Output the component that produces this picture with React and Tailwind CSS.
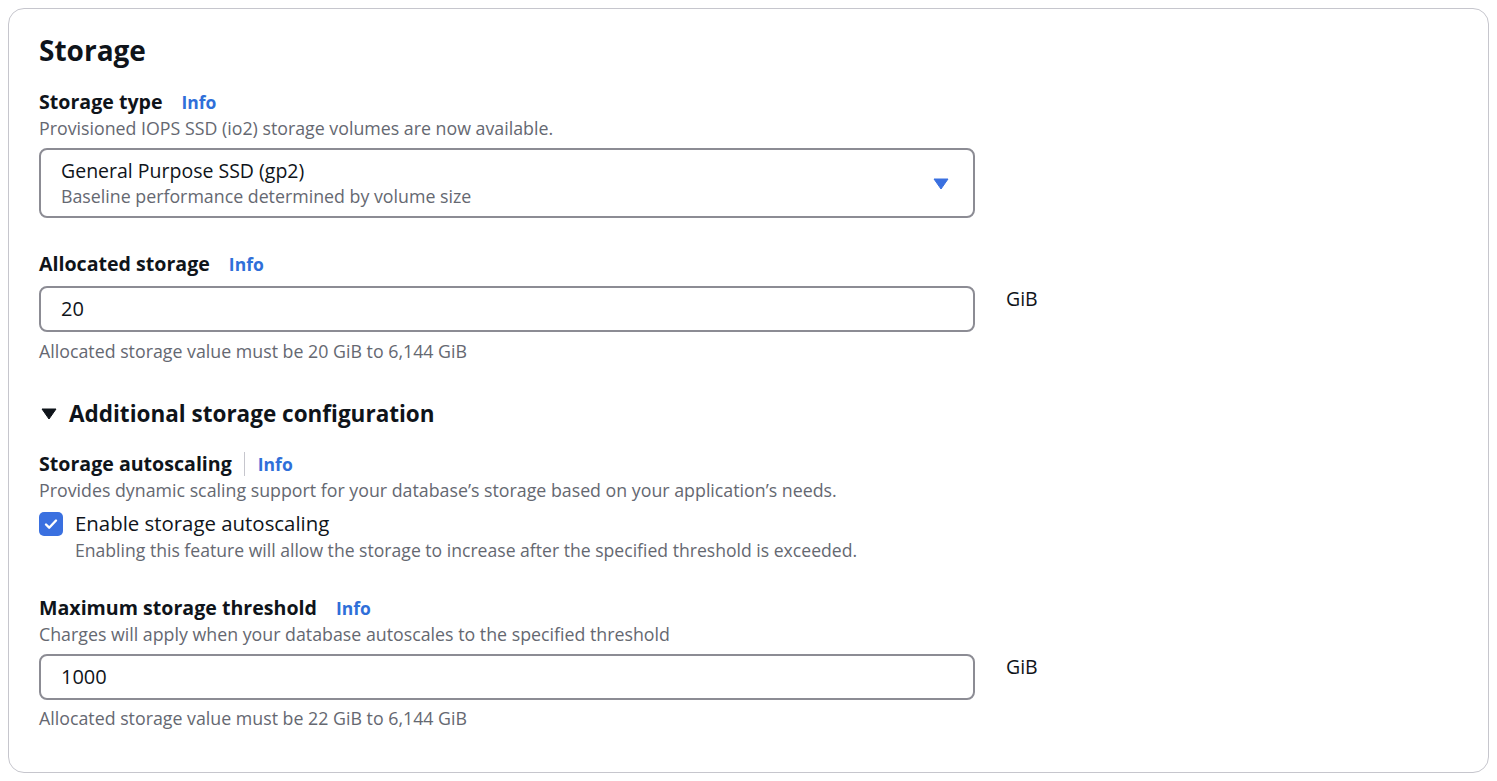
import { useState } from 'react'

function Info() {
  return <a className="text-[#2f6fd9] font-bold text-[17.5px] leading-[24px] cursor-pointer">Info</a>
}

function Label({ text, divider, children }) {
  return (
    <div className="flex items-center text-[19.6px] leading-[24px]">
      <span className="font-bold text-[#0f141a]">{text}</span>
      {divider ? <span className="ml-3 mr-[13px] h-[24px] w-px bg-[#c6c6cd]" /> : <span className="w-[19px]" />}
      {children}
    </div>
  )
}

function NumInput({ value }) {
  return (
    <div className="flex items-start">
      <div className="w-[936px] h-[46px] border-2 border-[#8c8c94] rounded-[8px] flex items-center px-5 text-[20px] text-[#0f141a]">
        {value}
      </div>
      <span className="ml-[31px] mt-[1px] text-[19.5px] leading-[24px] text-[#0f141a]">GiB</span>
    </div>
  )
}

export default function App() {
  const [checked, setChecked] = useState(true)

  return (
    <div className="bg-white min-h-screen p-2" style={{ fontFamily: '"Open Sans", "Noto Sans", sans-serif' }}>
      <div className="border border-[#c6c6cd] rounded-[16px] px-[30px] pt-[23px] pb-[44px] text-[#0f141a]">
        <h2 className="text-[28px] leading-[36px] font-bold">Storage</h2>

        <div className="mt-[22px]">
          <Label text="Storage type"><Info /></Label>
        </div>
        <p className="mt-[2px] text-[17.8px] leading-[24px] text-[#656871]">Provisioned IOPS SSD (io2) storage volumes are now available.</p>
        <div className="mt-[8px] w-[936px] h-[70px] border-2 border-[#8c8c94] rounded-[8px] flex items-center justify-between pl-5 pr-6">
          <div className="flex flex-col">
            <span className="text-[19.5px] leading-[24px]">General Purpose SSD (gp2)</span>
            <span className="mt-[2px] text-[17.8px] leading-[22px] text-[#656871]">Baseline performance determined by volume size</span>
          </div>
          <svg width="16" height="12" viewBox="0 0 16 12" className="mb-[-2px]">
            <path d="M1 1h14L8 11z" fill="#3a70e0" stroke="#3a70e0" strokeWidth="1" strokeLinejoin="round" />
          </svg>
        </div>

        <div className="mt-[34px]">
          <Label text="Allocated storage"><Info /></Label>
        </div>
        <div className="mt-[10px]">
          <NumInput value="20" />
        </div>
        <p className="mt-[9px] text-[17.8px] leading-[20px] text-[#656871]">Allocated storage value must be 20 GiB to 6,144 GiB</p>

        <div className="mt-[38px] flex items-center text-[22.5px] leading-[30px] font-bold">
          <svg width="16" height="12" viewBox="0 0 16 12" className="ml-[2px] mr-[12px]">
            <path d="M1 1h14L8 11z" fill="#0f141a" stroke="#0f141a" strokeWidth="1" strokeLinejoin="round" />
          </svg>
          Additional storage configuration
        </div>

        <div className="mt-[23px]">
          <Label text="Storage autoscaling" divider><Info /></Label>
        </div>
        <p className="mt-[2px] text-[17.8px] leading-[24px] text-[#656871]">Provides dynamic scaling support for your database’s storage based on your application’s needs.</p>
        <div className="mt-[9px] flex items-start">
          <button onClick={() => setChecked(!checked)}
            className={`mt-[1px] w-[24px] h-[24px] rounded-[5px] flex items-center justify-center ${checked ? 'bg-[#3a70e0]' : 'border-2 border-[#8c8c94] bg-white'}`}>
            {checked && (
              <svg width="16" height="16" viewBox="0 0 16 16">
                <path d="M3 8.5l3.2 3.2L13 4.5" fill="none" stroke="white" strokeWidth="2.4" strokeLinecap="round" strokeLinejoin="round" />
              </svg>
            )}
          </button>
          <div className="ml-[12px]">
            <div className="text-[20.4px] leading-[24px]">Enable storage autoscaling</div>
            <div className="mt-[5px] text-[17.6px] leading-[20px] text-[#656871]">Enabling this feature will allow the storage to increase after the specified threshold is exceeded.</div>
          </div>
        </div>

        <div className="mt-[36px]">
          <Label text="Maximum storage threshold"><Info /></Label>
        </div>
        <p className="mt-[2px] text-[17.8px] leading-[24px] text-[#656871]">Charges will apply when your database autoscales to the specified threshold</p>
        <div className="mt-[8px]">
          <NumInput value="1000" />
        </div>
        <p className="mt-[8px] text-[17.8px] leading-[20px] text-[#656871]">Allocated storage value must be 22 GiB to 6,144 GiB</p>
      </div>
    </div>
  )
}
